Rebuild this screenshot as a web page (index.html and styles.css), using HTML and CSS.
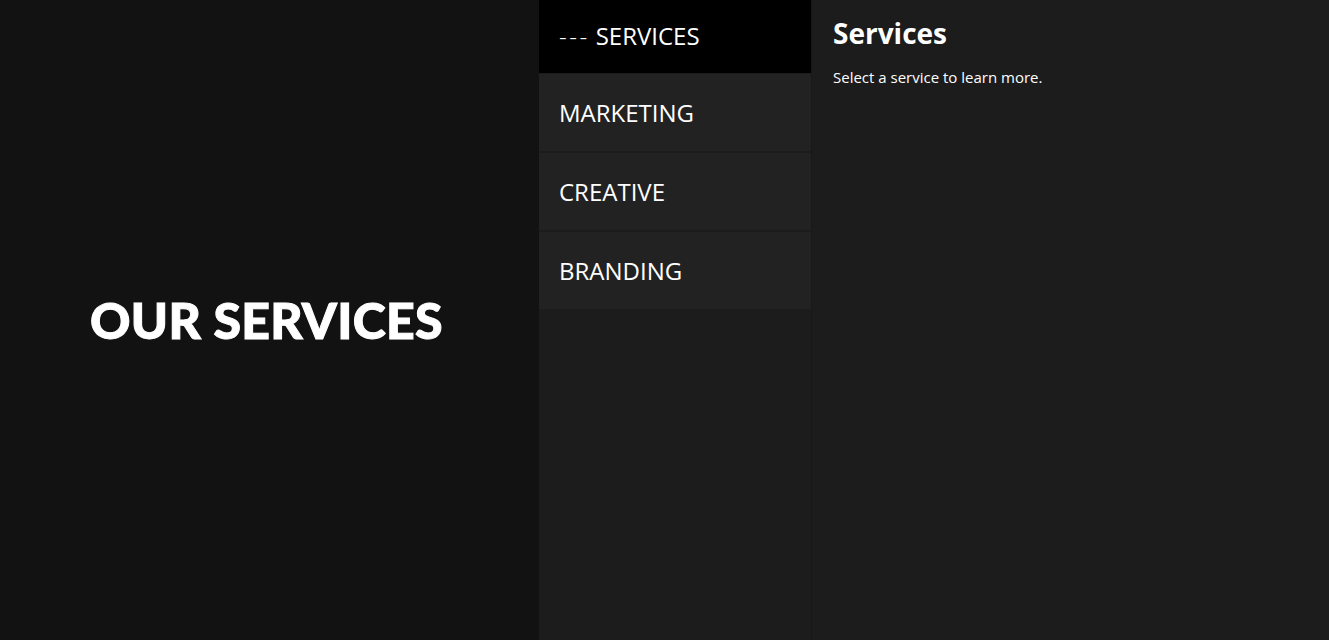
FILE: index.html
```html
<!DOCTYPE html>
<html>
<head>
<meta charset="utf-8">
<link rel="stylesheet" href="styles.css">
</head>
<body>
<div class="page">
  <section class="hero">
    <h1 class="hero-title">OUR SERVICES</h1>
  </section>
  <nav class="menu">
    <div class="menu-head"><span class="dash">---</span>SERVICES</div>
    <div class="menu-item">MARKETING</div>
    <div class="menu-item">CREATIVE</div>
    <div class="menu-item">BRANDING</div>
  </nav>
  <main class="detail">
    <h2 class="detail-title">Services</h2>
    <p class="detail-text">Select a service to learn more.</p>
  </main>
</div>
</body>
</html>
```
FILE: styles.css
```css
html, body {
  margin: 0;
  padding: 0;
  height: 100%;
  background: #1c1c1c;
  color: #fff;
  font-family: "Open Sans", "Noto Sans", sans-serif;
}
.page {
  display: grid;
  grid-template-columns: 539px 273px 1fr;
  height: 640px;
}
.hero {
  background: #121212;
  display: flex;
  align-items: center;
  padding-left: 90px;
}
.hero-title {
  margin: 0;
  font-family: "Lato", sans-serif;
  font-weight: 900;
  font-size: 50px;
  letter-spacing: 0.3px;
  -webkit-text-stroke: 1px #fff;
}
.menu {
  background: #1c1c1c;
  border-right: 1px solid #181818;
  display: flex;
  flex-direction: column;
  gap: 2px;
}
.menu-head {
  background: #000;
  height: 73px;
  display: flex;
  align-items: center;
  padding-left: 20px;
  padding-bottom: 2px;
  box-sizing: border-box;
  font-size: 24px;
  margin-bottom: -1px;
}
.dash {
  letter-spacing: 2.5px;
  margin-right: 6px;
  font-weight: 300;
}
.menu-item {
  background: #222222;
  height: 77px;
  display: flex;
  align-items: center;
  padding-left: 20px;
  font-size: 24px;
}
.detail {
  background: #1c1c1c;
  padding: 14px 21px;
}
.detail-title {
  margin: 0;
  font-size: 28px;
  font-weight: 700;
}
.detail-text {
  margin: 15px 0 0;
  font-size: 15px;
}
```
